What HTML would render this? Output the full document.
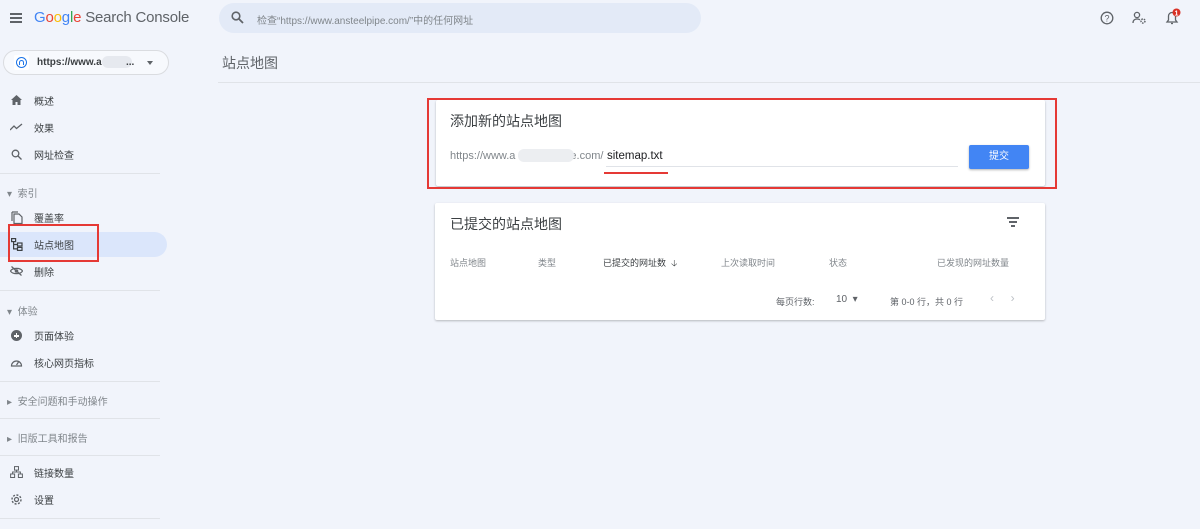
<!DOCTYPE html><html><head><meta charset="utf-8"><style>
*{margin:0;padding:0;box-sizing:border-box}
body{width:1200px;height:529px;background:#f1f4fb;font-family:"Liberation Sans","Noto Sans CJK SC",sans-serif;position:relative;overflow:hidden;color:#3c4043}
.a{position:absolute}
.nav{position:absolute;left:0;font-size:10px;color:#3c4043}
.nav span{position:absolute;left:34px;top:-7px;white-space:nowrap}
.sec{position:absolute;left:7px;font-size:10px;color:#80868b;white-space:nowrap}
.hr{position:absolute;left:0;width:160px;height:1px;background:#e0e3e8}
.card{position:absolute;background:#fff;box-shadow:0 1px 2px rgba(0,0,0,.25);border-radius:2px}
.th{position:absolute;top:53px;font-size:9px;color:#80868b;white-space:nowrap}
</style></head><body>
<div class="a" style="left:10px;top:13px;width:12px;height:2px;background:#5f6368;box-shadow:0 4px 0 #5f6368,0 8px 0 #5f6368"></div>
<div class="a" style="left:34px;top:9px;font-size:15px;white-space:nowrap;letter-spacing:-.2px"><span style="color:#4285f4">G</span><span style="color:#ea4335">o</span><span style="color:#fbbc05">o</span><span style="color:#4285f4">g</span><span style="color:#34a853">l</span><span style="color:#ea4335">e</span> <span style="color:#5f6368">Search Console</span></div>
<div class="a" style="left:219px;top:3px;width:482px;height:30px;border-radius:15px;background:#e3eaf7"></div>
<svg class="a" style="left:231px;top:11px" width="13" height="13" viewBox="0 0 13 13"><circle cx="5" cy="5" r="3.8" fill="none" stroke="#5f6368" stroke-width="1.6"/><path d="M8 8l4 4" stroke="#5f6368" stroke-width="1.8"/></svg>
<div class="a" style="left:257px;top:12px;font-size:10px;color:#80868b;white-space:nowrap">检查“https://www.ansteelpipe.com/”中的任何网址</div>
<svg class="a" style="left:1100px;top:11px" width="14" height="14"><circle cx="7" cy="7" r="5.8" fill="none" stroke="#5f6368" stroke-width="1.3"/><text x="7" y="10.5" font-size="9" text-anchor="middle" fill="#5f6368" font-family="Liberation Sans">?</text></svg>
<svg class="a" style="left:1132px;top:11px" width="15" height="14"><circle cx="5" cy="4" r="2.6" fill="none" stroke="#5f6368" stroke-width="1.3"/><path d="M1 12c0-3 2-4 4-4s2 .3 3 .8" fill="none" stroke="#5f6368" stroke-width="1.3"/><circle cx="11" cy="10" r="2" fill="none" stroke="#5f6368" stroke-width="1.5" stroke-dasharray="1.5 1"/></svg>
<svg class="a" style="left:1164px;top:8px" width="18" height="18"><path d="M3 14h10l-1.5-2V8a3.5 3.5 0 0 0-7 0v4z" fill="none" stroke="#5f6368" stroke-width="1.3"/><path d="M7 15.5h2" stroke="#5f6368" stroke-width="1.3"/><circle cx="12.5" cy="4.5" r="4" fill="#d93025"/><text x="12.5" y="7.5" font-size="7" text-anchor="middle" fill="#fff" font-family="Liberation Sans" font-weight="bold">1</text></svg>
<div class="a" style="left:3px;top:50px;width:166px;height:25px;border:1px solid #dadce0;border-radius:13px;background:#f7f9fd"></div>
<div class="a" style="left:14px;top:55px;width:15px;height:15px;background:#fff;border-radius:2px"></div>
<div class="a" style="left:16px;top:57px;width:11px;height:11px;border:1.5px solid #1a73e8;border-radius:50%"></div>
<div class="a" style="left:19px;top:60px;width:5px;height:5px;border:1.3px solid #1a73e8;border-bottom:none;border-radius:3px 3px 0 0"></div>
<div class="a" style="left:37px;top:57px;font-size:10px;font-weight:bold;color:#3c4043">https://www.a</div>
<div class="a" style="left:102px;top:56px;width:30px;height:12px;background:#e6e9ef;border-radius:6px"></div>
<div class="a" style="left:126px;top:57px;font-size:10px;font-weight:bold;color:#3c4043">...</div>
<div class="a" style="left:147px;top:61px;border:3px solid transparent;border-top:4px solid #5f6368"></div>
<div class="a" style="left:0;top:232px;width:167px;height:25px;background:#dbe6fb;border-radius:0 13px 13px 0"></div>
<div class="nav" style="top:100px"><svg class="a" style="left:11px;top:-5px" width="11" height="10"><path d="M5.5 0L0 5h1.5v5h3V7h2v3h3V5H11z" fill="#5f6368"/></svg><span>概述</span></div>
<div class="nav" style="top:127px"><svg class="a" style="left:10px;top:-4px" width="13" height="8"><path d="M0 7l4-4 2.5 2.5L12 1" fill="none" stroke="#5f6368" stroke-width="1.3"/></svg><span>效果</span></div>
<div class="nav" style="top:154px"><svg class="a" style="left:11px;top:-5px" width="11" height="11"><circle cx="4.5" cy="4.5" r="3.3" fill="none" stroke="#5f6368" stroke-width="1.3"/><path d="M7 7l3.5 3.5" stroke="#5f6368" stroke-width="1.3"/></svg><span>网址检查</span></div>
<div class="hr" style="top:173px"></div>
<div class="sec" style="top:185px">▾&nbsp; 索引</div>
<div class="nav" style="top:217px"><svg class="a" style="left:11px;top:-6px" width="12" height="13"><path d="M3 3h5l3 3v6.5H3z M1 1h6" fill="none" stroke="#5f6368" stroke-width="1.2"/><path d="M1 1v9" stroke="#5f6368" stroke-width="1.2"/></svg><span>覆盖率</span></div>
<div class="nav" style="top:244px"><svg class="a" style="left:11px;top:-6px" width="12" height="13"><rect x=".6" y=".6" width="4" height="3" fill="none" stroke="#3c4043" stroke-width="1.2"/><rect x="6.5" y="5" width="4.5" height="3" fill="none" stroke="#3c4043" stroke-width="1.2"/><rect x="6.5" y="9.4" width="4.5" height="3" fill="none" stroke="#3c4043" stroke-width="1.2"/><path d="M2.6 3.6v7.3h3.9M2.6 6.5h3.9" fill="none" stroke="#3c4043" stroke-width="1.2"/></svg><span>站点地图</span></div>
<div class="nav" style="top:271px"><svg class="a" style="left:10px;top:-5px" width="13" height="10"><path d="M.5 5C2.5 1.5 10.5 1.5 12.5 5 10.5 8.5 2.5 8.5.5 5z" fill="none" stroke="#5f6368" stroke-width="1.2"/><circle cx="6.5" cy="5" r="1.8" fill="#5f6368"/><path d="M1.5 .5l10 9" stroke="#5f6368" stroke-width="1.2"/></svg><span>删除</span></div>
<div class="hr" style="top:290px"></div>
<div class="sec" style="top:303px">▾&nbsp; 体验</div>
<div class="nav" style="top:335px"><div class="a" style="left:11px;top:-5px;width:11px;height:11px;border-radius:50%;background:#5f6368"></div><div class="a" style="left:14px;top:0;width:5px;height:1.5px;background:#fff"></div><div class="a" style="left:15.8px;top:-2px;width:1.5px;height:5px;background:#fff"></div><span>页面体验</span></div>
<div class="nav" style="top:362px"><svg class="a" style="left:10px;top:-5px" width="13" height="10"><path d="M1.5 9A5 5 0 1 1 11.5 9z" fill="none" stroke="#5f6368" stroke-width="1.2"/><path d="M6.5 8l2-3" stroke="#5f6368" stroke-width="1.2"/></svg><span>核心网页指标</span></div>
<div class="hr" style="top:381px"></div>
<div class="sec" style="top:393px">▸&nbsp; 安全问题和手动操作</div>
<div class="hr" style="top:418px"></div>
<div class="sec" style="top:430px">▸&nbsp; 旧版工具和报告</div>
<div class="hr" style="top:455px"></div>
<div class="nav" style="top:472px"><svg class="a" style="left:10px;top:-6px" width="13" height="12"><rect x="4.5" y=".6" width="4" height="3.5" fill="none" stroke="#5f6368"/><rect x=".6" y="8" width="4" height="3.5" fill="none" stroke="#5f6368"/><rect x="8.4" y="8" width="4" height="3.5" fill="none" stroke="#5f6368"/><path d="M6.5 4v2M2.6 8V6h7.8v2" fill="none" stroke="#5f6368"/></svg><span>链接数量</span></div>
<div class="nav" style="top:499px"><svg class="a" style="left:10px;top:-6px" width="13" height="13"><circle cx="6.5" cy="6.5" r="4.5" fill="none" stroke="#5f6368" stroke-width="1.4" stroke-dasharray="2 1.5"/><circle cx="6.5" cy="6.5" r="2" fill="none" stroke="#5f6368" stroke-width="1.2"/></svg><span>设置</span></div>
<div class="hr" style="top:518px"></div>
<div class="a" style="left:8px;top:224px;width:91px;height:38px;border:2px solid #e53935"></div>
<div class="a" style="left:222px;top:53px;font-size:14px;color:#5f6368">站点地图</div>
<div class="a" style="left:218px;top:82px;width:982px;height:1px;background:#e0e3e8"></div>
<div class="card" style="left:436px;top:100px;width:609px;height:86px">
<div class="a" style="left:14px;top:11px;font-size:14px;color:#3c4043">添加新的站点地图</div>
<div class="a" style="left:14px;top:50px;font-size:11px;color:#80868b;white-space:nowrap">https://www.a<span style="display:inline-block;width:55px"></span>e.com/</div>
<div class="a" style="left:82px;top:49px;width:56px;height:13px;background:#eceef1;border-radius:6px"></div>
<div class="a" style="left:171px;top:50px;font-size:11.5px;color:#202124">sitemap.txt</div>
<div class="a" style="left:170px;top:66px;width:352px;height:1px;background:#e0e3e8"></div>
<div class="a" style="left:168px;top:72px;width:64px;height:2px;background:#e53935"></div>
<div class="a" style="left:533px;top:45px;width:60px;height:24px;background:#4285f4;border-radius:2px;color:#fff;font-size:10px;text-align:center;line-height:24px;box-shadow:0 1px 2px rgba(0,0,0,.3)">提交</div>
</div>
<div class="a" style="left:427px;top:98px;width:630px;height:91px;border:2px solid #e53935"></div>
<div class="card" style="left:435px;top:203px;width:610px;height:117px">
<div class="a" style="left:15px;top:11px;font-size:14px;color:#3c4043">已提交的站点地图</div>
<div class="a" style="left:572px;top:14px;width:12px;height:1.5px;background:#5f6368"></div>
<div class="a" style="left:574px;top:18px;width:8px;height:1.5px;background:#5f6368"></div>
<div class="a" style="left:576px;top:22px;width:4px;height:1.5px;background:#5f6368"></div>
<div class="th" style="left:15px">站点地图</div>
<div class="th" style="left:103px">类型</div>
<div class="th" style="left:168px;color:#3c4043">已提交的网址数 &nbsp;🡣</div>
<div class="th" style="left:286px">上次读取时间</div>
<div class="th" style="left:394px">状态</div>
<div class="th" style="left:502px">已发现的网址数量</div>
<div class="th" style="left:341px;top:92px;color:#5f6368">每页行数:</div>
<div class="th" style="left:401px;top:91px;color:#5f6368;font-size:10px">10 &nbsp;▾</div>
<div class="th" style="left:455px;top:92px;color:#5f6368">第 0-0 行，共 0 行</div>
<div class="th" style="left:555px;top:88px;color:#bdc1c6;font-size:12px">‹ &nbsp;&nbsp;&nbsp;&nbsp;›</div>
</div>
</body></html>
